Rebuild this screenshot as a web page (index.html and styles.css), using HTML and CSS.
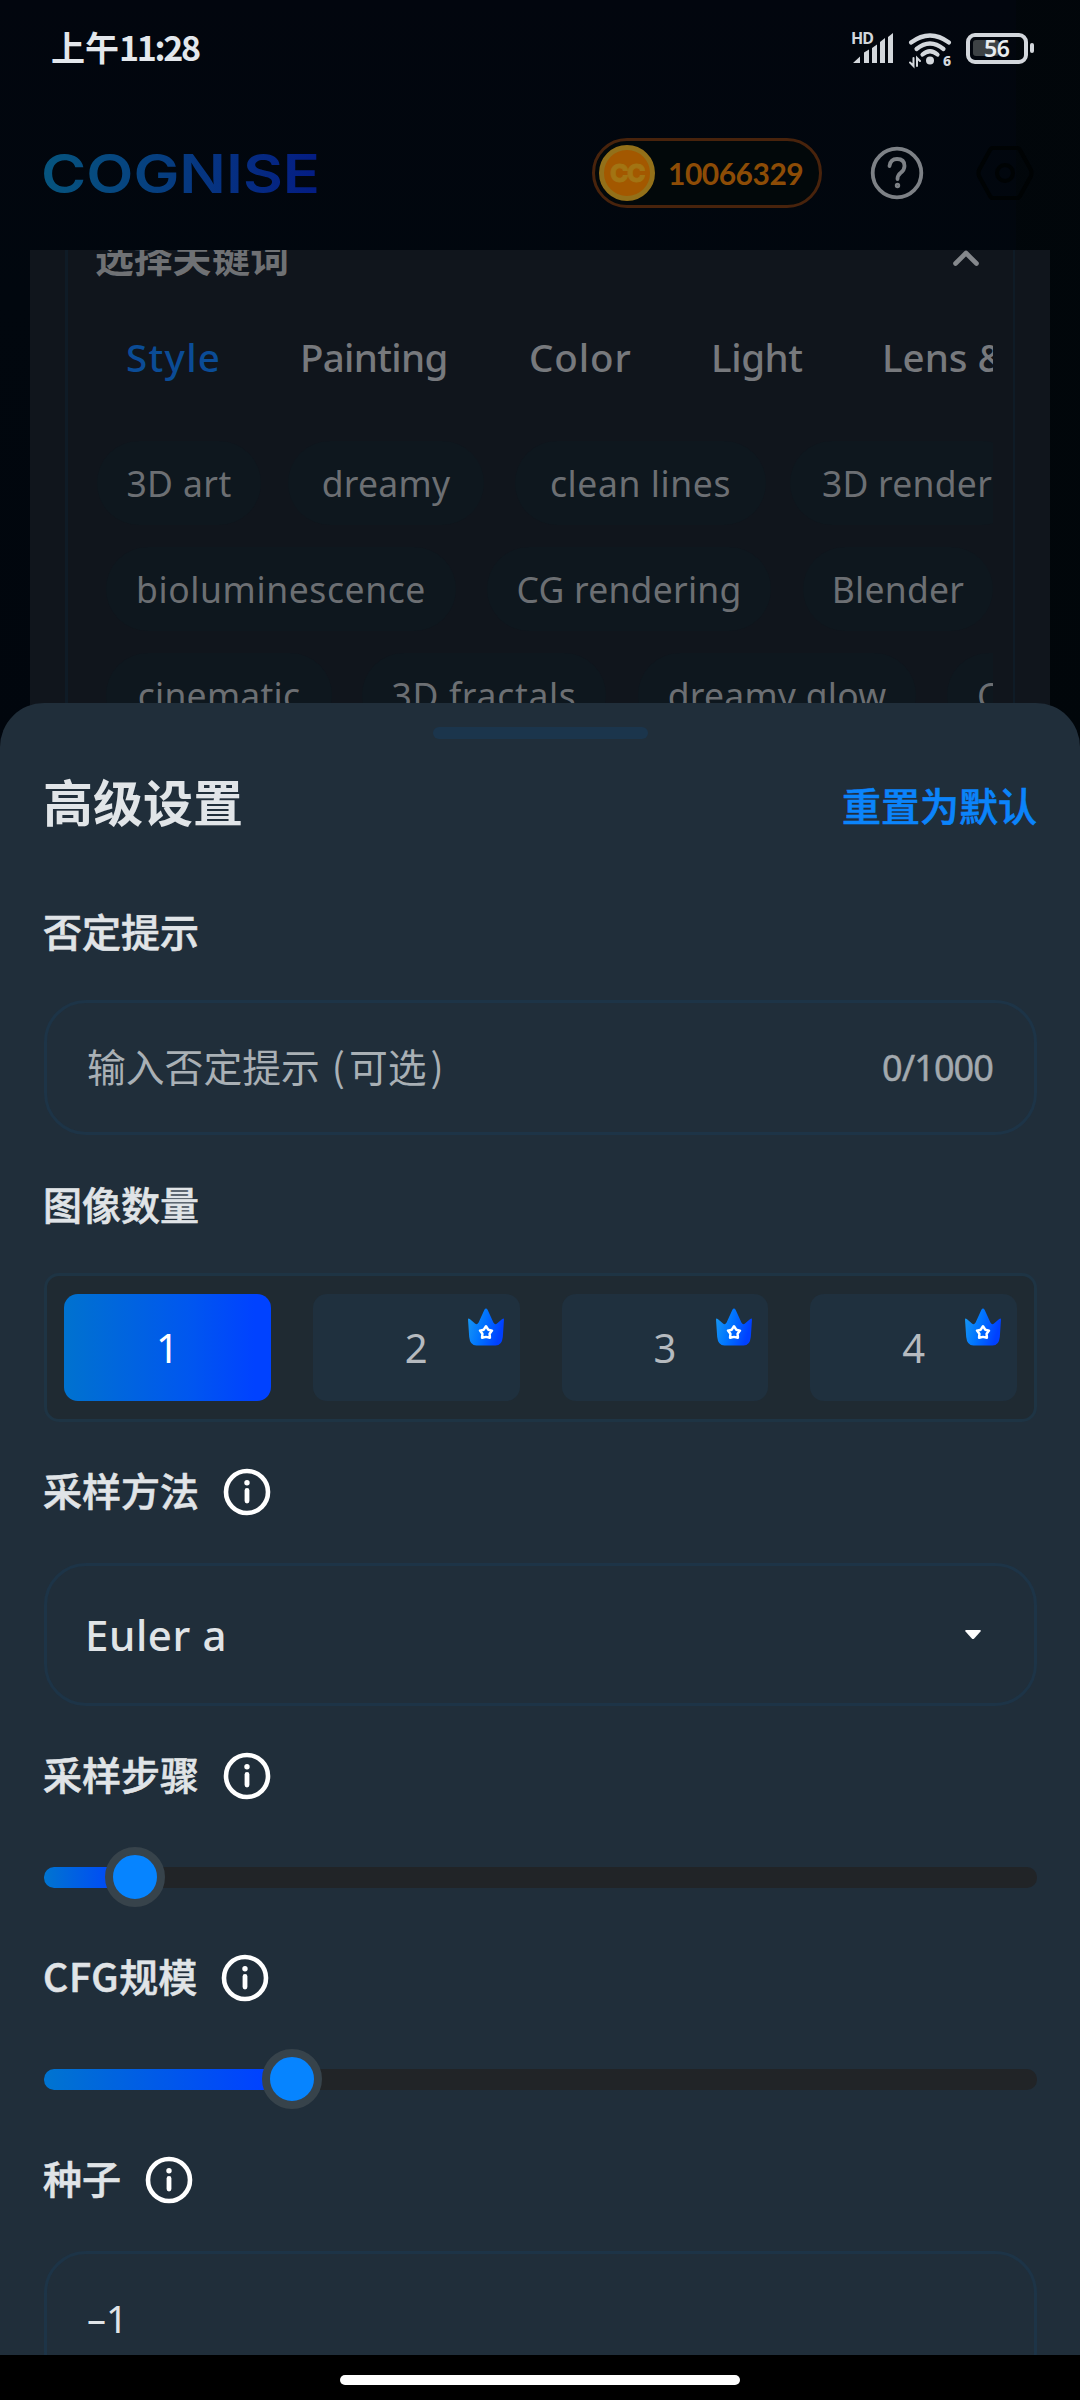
FILE: index.html
```html
<!DOCTYPE html>
<html lang="zh-CN">
<head>
<meta charset="utf-8">
<title>COGNISE</title>
<link rel="stylesheet" href="styles.css">
</head>
<body>
<svg class="defs" width="0" height="0" aria-hidden="true">
  <defs>
    <linearGradient id="crownFill" x1="0" y1="0" x2="1" y2="0.3">
      <stop offset="0" stop-color="#1a9cf0"/><stop offset="0.5" stop-color="#0074ff"/><stop offset="1" stop-color="#0040ff"/>
    </linearGradient>
    <symbol id="crown" viewBox="0 0 38 38">
      <path fill="url(#crownFill)" d="M1 11.5Q1 9.6 2.8 11L8 15.6Q10 17.2 11.6 14.6L17.4 1.8Q19 -1 20.6 1.8L26.400 14.600Q28 17.200 30 15.600L35.200 11Q37 9.600 37 11.500L35.800 29Q35 37.500 28.500 37.500H9.500Q3 37.500 2.200 29Z"/>
      <path fill="none" stroke="#fff" stroke-width="2.500" stroke-linejoin="round" d="M19 18.200L21.200 21.700L25 22.600L22.600 25.700L22.900 29.700L19 28.900L15.100 29.700L15.400 25.700L13 22.600L16.800 21.700Z"/>
    </symbol>
    <symbol id="info" viewBox="0 0 48 48">
      <circle cx="24" cy="24" r="21" fill="none" stroke="#fff" stroke-width="4.600"/>
      <circle cx="24" cy="14.800" r="2.700" fill="#fff"/>
      <path d="M24 22.500V33" stroke="#fff" stroke-width="4.800" stroke-linecap="round"/>
    </symbol>
  </defs>
</svg>
<div class="phone">
  <div class="backdrop">
    <div class="status">
      <div class="clock"><span>上午</span><span class="time">11:28</span></div>
      <svg class="status-icons" width="186" height="38" viewBox="0 0 186 38">
        <text class="hd" x="0" y="12" textLength="23">HD</text>
        <g fill="#d3d7dc">
          <path d="M2 31L9 24.500V31ZM13 20.500L18 17.500V31H13ZM21 16L26 12.500V31H21ZM29 10L34 6V31H29ZM37 5L42 1V31H37Z"/>
          <circle cx="79" cy="28.500" r="4"/>
        </g>
        <g fill="none" stroke="#d3d7dc" stroke-width="4.200" stroke-linecap="round">
          <path d="M60 10.500Q79 -3.500 98 10.500M65.500 17Q79 6 92.500 17M71.500 22.500Q79 16 86.500 22.500"/>
          <path stroke-width="2" d="M62.500 26V34L59 30.500M66 34V26L69 29"/>
        </g>
        <text class="six" x="92" y="34">6</text>
        <rect x="122" y="8" width="26" height="16" rx="3" fill="#3d4245"/>
        <rect x="117" y="3" width="58" height="27" rx="7" fill="none" stroke="#d3d7dc" stroke-width="4"/>
        <rect x="179" y="11" width="4" height="10" rx="2" fill="#d3d7dc"/>
        <text class="battery" x="133" y="24.500" textLength="26">56</text>
      </svg>
    </div>
    <div class="topbar">
      <svg class="logo" width="277" height="44" viewBox="0 0 277 44">
        <defs><linearGradient id="logoFill" x1="0" x2="1"><stop offset="0" stop-color="#06557e"/><stop offset="0.500" stop-color="#063a80"/><stop offset="1" stop-color="#041c83"/></linearGradient></defs>
        <text x="-1" y="41.500" textLength="279" lengthAdjust="spacingAndGlyphs" fill="url(#logoFill)">COGNISE</text>
      </svg>
      <div class="coins">
        <div class="coin">CC</div>
        <span class="amount">10066329</span>
      </div>
      <svg class="help" width="54" height="54" viewBox="0 0 54 54" fill="none" stroke="#7d8186" stroke-linecap="round">
        <circle cx="27" cy="27" r="24.300" stroke-width="3.800"/>
        <path stroke-width="3.800" d="M19.500 20Q20.500 13 27 13Q34.500 13 34.500 20Q34.500 24 30.500 27Q27.500 29.500 27.500 33"/>
        <circle cx="27.500" cy="39.500" r="1.200" stroke-width="3"/>
      </svg>
      <svg class="gear" width="58" height="56" viewBox="0 0 58 56" fill="none" stroke="#000304" stroke-width="4">
        <path stroke-linejoin="round" d="M17 3H41Q43 3 44 5L55 25Q56 28 55 31L44 51Q43 53 41 53H17Q15 53 14 51L3 31Q2 28 3 25L14 5Q15 3 17 3Z"/>
        <circle cx="29" cy="28" r="8"/>
      </svg>
    </div>
    <div class="card">
      <div class="keywords">
        <div class="kw-head">
          <span>选择关键词</span>
          <svg width="26" height="17" viewBox="0 0 26 17" fill="none" stroke="#85888c" stroke-width="4.600" stroke-linecap="round" stroke-linejoin="round"><path d="M2.500 13.500L13 3L23.500 13.500"/></svg>
        </div>
        <div class="tabs">
          <div class="tab tab-style active">Style</div>
          <div class="tab tab-painting">Painting</div>
          <div class="tab tab-color">Color</div>
          <div class="tab tab-light">Light</div>
          <div class="tab tab-lens">Lens &amp;</div>
        </div>
        <div class="chips first">
          <div class="chip c-art">3D art</div><div class="chip c-dreamy">dreamy</div><div class="chip c-lines">clean lines</div><div class="chip c-render">3D render</div>
        </div>
        <div class="chips">
          <div class="chip c-bio">bioluminescence</div><div class="chip c-cg">CG rendering</div><div class="chip c-blender">Blender</div>
        </div>
        <div class="chips">
          <div class="chip c-cine">cinematic</div><div class="chip c-fractals">3D fractals</div><div class="chip c-glow">dreamy glow</div><div class="chip c-more">C</div>
        </div>
      </div>
    </div>
  </div>

  <div class="sheet">
    <div class="grip"></div>
    <div class="sheet-head">
      <h1>高级设置</h1>
      <span class="reset">重置为默认</span>
    </div>

    <div class="label l-negative">否定提示</div>
    <div class="field f-negative">
      <span class="placeholder">输入否定提示<span class="paren open">(</span>可选<span class="paren close">)</span></span>
      <span class="counter">0/1000</span>
    </div>

    <div class="label l-count">图像数量</div>
    <div class="counts">
      <div class="count selected">1</div>
      <div class="count">2<svg class="crown"><use href="#crown"/></svg></div>
      <div class="count">3<svg class="crown"><use href="#crown"/></svg></div>
      <div class="count">4<svg class="crown"><use href="#crown"/></svg></div>
    </div>

    <div class="label l-method">采样方法<svg class="info"><use href="#info"/></svg></div>
    <div class="field f-method">
      <span class="value">Euler a</span>
      <svg class="caret" width="18" height="11" viewBox="0 0 18 11"><path fill="#fff" d="M2 1H16Q17.500 1 16.500 2.500L10.200 9.500Q9 10.500 7.800 9.500L1.500 2.500Q0.500 1 2 1Z"/></svg>
    </div>

    <div class="label l-steps">采样步骤<svg class="info"><use href="#info"/></svg></div>
    <div class="slider"><div class="fill" style="width: 91px"></div><div class="thumb"></div></div>

    <div class="label l-cfg"><span class="cfg">CFG</span>规模<svg class="info"><use href="#info"/></svg></div>
    <div class="slider"><div class="fill" style="width: 248px"></div><div class="thumb"></div></div>

    <div class="label l-seed">种子<svg class="info"><use href="#info"/></svg></div>
    <div class="field f-seed"><span class="seed">–1</span></div>
  </div>
  <div class="navbar"><div class="home"></div></div>
</div>
</body>
</html>
```

FILE: styles.css
```css
* { box-sizing: border-box; }
body { margin: 0; background: #000; }
.defs { display: block; position: absolute; }
.phone {
  width: 1080px; height: 2400px; overflow: hidden;
  display: flex; flex-direction: column;
  font-family: "Noto Sans", "Noto Sans CJK SC", sans-serif;
}

/* dimmed page behind the sheet */
.backdrop {
  height: 747px; flex: none; overflow: hidden;
  display: flex; flex-direction: column;
  background: linear-gradient(90deg, transparent 1016px, #01060899 1016px), linear-gradient(#02060e, #01070e 300px, #01060d);
}
.status { height: 96px; flex: none; display: flex; justify-content: space-between; align-items: flex-start; padding: 0 43px 0 51px; }
.clock {
  display: flex; margin-top: 22px; height: 50px; line-height: 50px;
  font-family: "Noto Sans CJK SC", sans-serif; font-weight: 700; font-size: 34px; color: #e3e7ec;
}
.time { font-size: 34px; letter-spacing: -2.3px; }
.status-icons { margin-top: 32px; overflow: visible; }
.status-icons text { font-family: "Noto Sans", sans-serif; }
.hd { font-size: 16px; font-weight: 700; fill: #d3d7dc; }
.six { font-size: 14px; font-weight: 800; fill: #d3d7dc; }
.battery { font-size: 23px; font-weight: 600; fill: #e8ecf0; }

.topbar { height: 153px; flex: none; display: flex; align-items: center; padding: 0 46px 0 42px; }
.logo { overflow: visible; }
.logo text { font-family: Inter, sans-serif; font-weight: 600; font-size: 53px; }
.coins {
  margin-left: 273px; width: 230px; height: 70px; border: 3px solid #48230c; border-radius: 35px;
  display: flex; align-items: center; padding-left: 4px; background: #02080a;
}
.coin {
  width: 56px; height: 56px; border-radius: 50%; border: 5px solid #937019; background: #a35800;
  display: flex; align-items: center; justify-content: center;
  font: 800 25px/46px Inter, sans-serif; letter-spacing: -1.5px; color: #a27413;
  -webkit-text-stroke: 0.8px #a27413;
}
.amount { margin-left: 13px; font: 700 30px/40px Lato, sans-serif; letter-spacing: -0.5px; color: #8d4c06; }
.help { margin-left: 48px; }
.gear { margin-left: auto; }

.card { margin: 1px 30px 0; flex: 1; min-height: 0; background: #10151c; padding: 0 35px; overflow: hidden; }
.keywords { height: 100%; border: solid #0f1b26; border-width: 0 2px 0 3px; padding: 0 20px 0 27px; overflow: hidden; }
.kw-head { height: 54px; margin-top: -22px; display: flex; justify-content: space-between; align-items: center; font: 700 38.800px/54px "Noto Sans CJK SC", sans-serif; color: #6f7174; padding-right: 14px; }
.kw-head svg { margin-top: 6px; }
.tabs { display: flex; height: 119px; padding: 47px 0 0 31px; overflow: hidden; white-space: nowrap; }
.tab { flex: none; height: 72px; line-height: 56px; font-size: 38.500px; font-weight: 500; color: #77797d; }
.tab.active { color: #0b4c96; }
.tab.active::after { content: ""; display: block; width: 84px; height: 8px; margin: 16px 0 0 4px; border-radius: 8px 8px 0 0; background: #07427f; }
.tab-style { width: 174px; letter-spacing: 1.3px; }
.tab-painting { width: 229px; letter-spacing: -0.7px; }
.tab-color { width: 182px; letter-spacing: 0.9px; }
.tab-light { width: 171px; letter-spacing: -0.4px; }
.chips { display: flex; height: 84px; margin: 22px 0 0 11px; overflow: hidden; white-space: nowrap; }
.chips.first { margin: 40px 0 0 2px; }
.chip { flex: none; height: 84px; border-radius: 42px; background: #0e171e; text-align: center; line-height: 84px; font-size: 35.500px; letter-spacing: 0.25px; color: #6c6f73; }
.c-art { width: 164px; letter-spacing: 0.4px; }
.c-dreamy { width: 196px; margin-left: 27px; }
.c-lines { width: 251px; margin-left: 31px; letter-spacing: 0.6px; }
.c-render { width: 234px; margin-left: 24px; }
.c-bio { width: 350px; letter-spacing: 0.6px; }
.c-cg { width: 284px; margin-left: 31px; }
.c-blender { width: 190px; margin-left: 32px; }
.c-cine { width: 226px; }
.c-fractals { width: 244px; margin-left: 30px; letter-spacing: 0.7px; }
.c-glow { width: 278px; margin-left: 32px; }
.c-more { width: 130px; margin-left: 31px; text-align: left; padding-left: 30px; }

/* settings sheet */
.sheet {
  height: 1652px; margin-top: -44px; flex: none; overflow: hidden; position: relative;
  background: #202e3a; border-radius: 44px 44px 0 0; padding: 24px 43px 0 44px;
}
.grip { width: 215px; height: 12px; margin: 0 auto; border-radius: 6px; background: #1b354c; }
.sheet-head {
  height: 124px; display: flex; justify-content: space-between; align-items: center;
  font-family: "Noto Sans CJK SC", sans-serif;
}
.sheet-head h1 { margin: -3px 0 0 -1px; font-size: 50px; line-height: 72px; font-weight: 700; color: #e1e5e8; }
.reset { margin-top: 5px; font-size: 39px; line-height: 60px; font-weight: 500; color: #0b84fb; -webkit-text-stroke: 0.6px #0b84fb; }
.label {
  height: 60px; display: flex; align-items: center; color: #e0e4e7; margin-left: -1px;
  font: 500 39px/60px "Noto Sans CJK SC", sans-serif; -webkit-text-stroke: 0.6px #e0e4e7;
}
.info { width: 48px; height: 48px; margin: 5px 0 0 24px; }
.cfg { letter-spacing: 0.7px; }
.l-negative { margin-top: 37px; }
.l-count { margin-top: 38px; }
.l-method { margin-top: 37px; }
.l-steps { margin-top: 37px; }
.l-cfg, .l-seed { margin-top: 37px; }
.field {
  border: 3px solid #1d3447; border-radius: 42px; padding: 0 41px 0 40px;
  display: flex; align-items: center; justify-content: space-between; color: #e0e4e7;
}
.f-negative { height: 135px; margin-top: 40px; }
.f-method { height: 143px; margin-top: 44px; padding: 0 52px 0 38px; }
.f-seed { height: 143px; margin-top: 44px; }
.placeholder { margin-top: -5px; font: 400 38.800px/60px "Noto Sans CJK SC", sans-serif; color: #a9b0b5; }
.paren.open { margin: 0 4px 0 12px; }
.paren.close { margin-left: 4px; }
.counter { font-size: 36px; color: #a3a9ae; letter-spacing: -0.9px; -webkit-text-stroke: 0.5px #a3a9ae; }
.value { font-size: 42px; font-weight: 500; letter-spacing: 0.6px; }
.seed { margin-top: -9px; font-size: 38px; }
.counts {
  height: 149px; margin-top: 40px; border: 3px solid #1e3444; border-radius: 15px; background: #1f2a32;
  display: grid; grid-template-columns: repeat(4, 1fr); column-gap: 42px; padding: 18px 17px;
}
.count {
  position: relative; border-radius: 14px; background: #1f303e; color: #b5babf;
  font-size: 40px; line-height: 107px; text-align: center;
}
.count.selected { color: #fff; background: linear-gradient(90deg, #0072cf, #0057ef 60%, #0042ff 92%); }
.crown { position: absolute; top: 14px; right: 15px; width: 38px; height: 38px; }
.slider { height: 62px; margin-top: 43px; display: flex; align-items: center; position: relative; }
.slider::before { content: ""; position: absolute; left: 0; right: 0; height: 21px; border-radius: 10px; background: #212427; }
.fill { position: relative; height: 21px; border-radius: 10px 0 0 10px; background: linear-gradient(90deg, #0074d0, #0042ff 88%); }
.thumb { position: relative; width: 60px; height: 60px; margin-left: -30px; border: 8px solid #37434b; border-radius: 50%; background: #0684ff; }

.navbar { height: 45px; flex: none; background: #000; padding-top: 20px; }
.home { width: 400px; height: 10px; margin: 0 auto; border-radius: 5px; background: #fff; }
```
